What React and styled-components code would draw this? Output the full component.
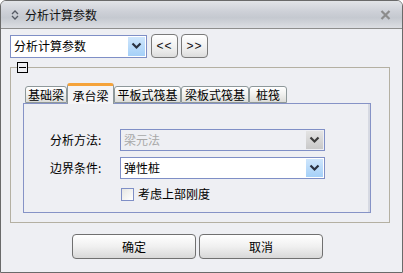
import React from "react";
import styled, { createGlobalStyle } from "styled-components";

const GlobalStyle = createGlobalStyle`
  html, body {
    margin: 0;
    padding: 0;
    background: #ffffff;
  }
  * {
    box-sizing: border-box;
  }
`;

const FONT = `"Noto Sans CJK SC", "Liberation Sans", sans-serif`;

const tabs = [
  { label: "基础梁", width: 42 },
  { label: "承台梁", width: 47, active: true },
  { label: "平板式筏基", width: 67 },
  { label: "梁板式筏基", width: 68 },
  { label: "桩筏", width: 38 },
];

const Chevron = ({ color = "#2a3140" }) => (
  <svg width="11" height="8" viewBox="0 0 11 8">
    <path d="M1.5 1.5 L5.5 5.5 L9.5 1.5" fill="none" stroke={color} strokeWidth="2.2" />
  </svg>
);

const App = () => (
  <>
    <GlobalStyle />
    <Window>
      <TitleBar>
        <svg width="8" height="10" viewBox="0 0 8 10">
          <path d="M1 4 L4 1 L7 4 M1 6 L4 9 L7 6" fill="none" stroke="#555a64" strokeWidth="1.3" />
        </svg>
        <TitleText>分析计算参数</TitleText>
        <CloseIcon>
          <svg width="11" height="10" viewBox="0 0 11 10">
            <path d="M1.5 1 L9.5 9 M9.5 1 L1.5 9" stroke="#8c8c8c" strokeWidth="2.2" />
          </svg>
        </CloseIcon>
      </TitleBar>

      <Content>
        <TopRow>
          <Combo $width={137}>
            <ComboText>分析计算参数</ComboText>
            <ArrowBox>
              <Chevron />
            </ArrowBox>
          </Combo>
          <SmallButton>&lt;&lt;</SmallButton>
          <SmallButton>&gt;&gt;</SmallButton>
        </TopRow>

        <GroupBox>
          <Collapse />
          <TabStrip>
            {tabs.map((t) => (
              <Tab key={t.label} $active={t.active} $width={t.width}>
                {t.label}
              </Tab>
            ))}
          </TabStrip>
          <Panel>
            <FormRow>
              <Label>分析方法:</Label>
              <Combo $width={205} $disabled>
                <ComboText $disabled>梁元法</ComboText>
                <ArrowBox $disabled>
                  <Chevron color="#3c3c3c" />
                </ArrowBox>
              </Combo>
            </FormRow>
            <FormRow>
              <Label>边界条件:</Label>
              <Combo $width={205}>
                <ComboText>弹性桩</ComboText>
                <ArrowBox>
                  <Chevron />
                </ArrowBox>
              </Combo>
            </FormRow>
            <CheckRow>
              <CheckBox />
              <span>考虑上部刚度</span>
            </CheckRow>
          </Panel>
        </GroupBox>

        <ButtonRow>
          <DialogButton>确定</DialogButton>
          <DialogButton>取消</DialogButton>
        </ButtonRow>
      </Content>
    </Window>
  </>
);

const Window = styled.div`
  width: 403px;
  height: 273px;
  border: 1px solid #6a6a6a;
  border-radius: 6px 6px 0 0;
  background: #eeeff3;
  display: flex;
  flex-direction: column;
  overflow: hidden;
  font-family: ${FONT};
  font-size: 12px;
  color: #000;
`;

const TitleBar = styled.div`
  height: 28px;
  display: flex;
  align-items: center;
  padding: 0 0 0 10px;
  gap: 6px;
  border-bottom: 1px solid #8e8e8e;
  background: linear-gradient(to bottom, #e2e4e8 0%, #cdd0d7 40%, #c5c9d0 62%, #dcdee3 100%);
`;

const TitleText = styled.span`
  font-size: 12px;
  line-height: 14px;
  color: #111;
  flex: 1;
`;

const CloseIcon = styled.div`
  width: 28px;
  display: flex;
  justify-content: center;
  margin-right: 3px;
`;

const Content = styled.div`
  padding: 5px 12px 0 9px;
  display: flex;
  flex-direction: column;
`;

const TopRow = styled.div`
  display: flex;
  align-items: center;
  gap: 3px;
  height: 24px;
`;

const Combo = styled.div`
  width: ${(p) => p.$width}px;
  height: ${(p) => (p.$width > 140 ? 22 : 23)}px;
  border: 1px solid #7f8fc6;
  background: ${(p) => (p.$disabled ? "#eeeff3" : "#ffffff")};
  display: flex;
  align-items: center;
  padding: 1px;
  margin-right: ${(p) => (p.$width > 140 ? 0 : 1)}px;
`;

const ComboText = styled.span`
  flex: 1;
  padding-left: 2px;
  line-height: 14px;
  color: ${(p) => (p.$disabled ? "#a8a8a8" : "#000")};
`;

const ArrowBox = styled.div`
  width: 17px;
  height: 100%;
  display: flex;
  align-items: center;
  justify-content: center;
  background: ${(p) =>
    p.$disabled
      ? "linear-gradient(to bottom, #e4e4e4, #c9c9c9)"
      : "linear-gradient(to bottom, #cfe6fc, #a5d0f8)"};
`;

const SmallButton = styled.button`
  width: 27px;
  height: 24px;
  padding: 0;
  border: 1px solid #7a7a7a;
  border-radius: 4px;
  background: linear-gradient(to bottom, #ffffff, #ebebeb 70%, #dcdcdc);
  font-family: "Liberation Sans", sans-serif;
  font-size: 12px;
  letter-spacing: 1px;
  color: #111;
`;

const GroupBox = styled.div`
  position: relative;
  margin-top: 9px;
  border: 1px solid #b4b0a2;
  padding: 15px 18px 9px 12px;
`;

const Collapse = styled.div`
  position: absolute;
  left: 6px;
  top: -6px;
  width: 11px;
  height: 11px;
  border: 1px solid #000;
  background: #eeeff3;

  &::after {
    content: "";
    position: absolute;
    left: 1px;
    right: 1px;
    top: 4px;
    height: 1px;
    background: #000;
  }
`;

const TabStrip = styled.div`
  display: flex;
  align-items: flex-end;
  height: 20px;
  padding-left: 2px;
`;

const Tab = styled.div`
  position: relative;
  width: ${(p) => p.$width}px;
  height: ${(p) => (p.$active ? 21 : 17)}px;
  margin-bottom: ${(p) => (p.$active ? -1 : 0)}px;
  z-index: ${(p) => (p.$active ? 1 : 0)};
  display: flex;
  align-items: center;
  justify-content: center;
  line-height: 14px;
  border: 1px solid #8e989a;
  border-bottom: ${(p) => (p.$active ? "none" : "1px solid #8e989a")};
  border-top: ${(p) => (p.$active ? "3px solid #f5a33a" : "1px solid #8e989a")};
  border-radius: 3px 3px 0 0;
  background: ${(p) =>
    p.$active ? "#f4f4f6" : "linear-gradient(to bottom, #ffffff, #f0f0ee 50%, #dcdcd8)"};
  padding-top: ${(p) => (p.$active ? 1 : 0)}px;
`;

const Panel = styled.div`
  height: 110px;
  border: 1px solid #8693c6;
  background: #eeeff3;
  box-shadow: inset -2px 0 0 #d6d9e2;
  padding: 25px 0 0 26px;
  display: flex;
  flex-direction: column;
  gap: 6px;
`;

const FormRow = styled.div`
  display: flex;
  align-items: center;
`;

const Label = styled.span`
  width: 70px;
  line-height: 14px;
`;

const CheckRow = styled.div`
  display: flex;
  align-items: center;
  gap: 4px;
  margin-top: 2px;
  padding-left: 71px;
  line-height: 14px;
`;

const CheckBox = styled.div`
  width: 13px;
  height: 13px;
  border: 1px solid #7f8fc6;
  background: linear-gradient(135deg, #e6e6e2, #ffffff);
`;

const ButtonRow = styled.div`
  display: flex;
  gap: 3px;
  margin-top: 11px;
  padding-left: 62px;
`;

const DialogButton = styled.button`
  width: 124px;
  height: 25px;
  padding: 0;
  border: 1px solid #707070;
  border-radius: 4px;
  background: linear-gradient(to bottom, #ffffff, #f0f0f0 50%, #d8d8d8);
  font-family: ${FONT};
  font-size: 12px;
  color: #000;
`;

export default App;
